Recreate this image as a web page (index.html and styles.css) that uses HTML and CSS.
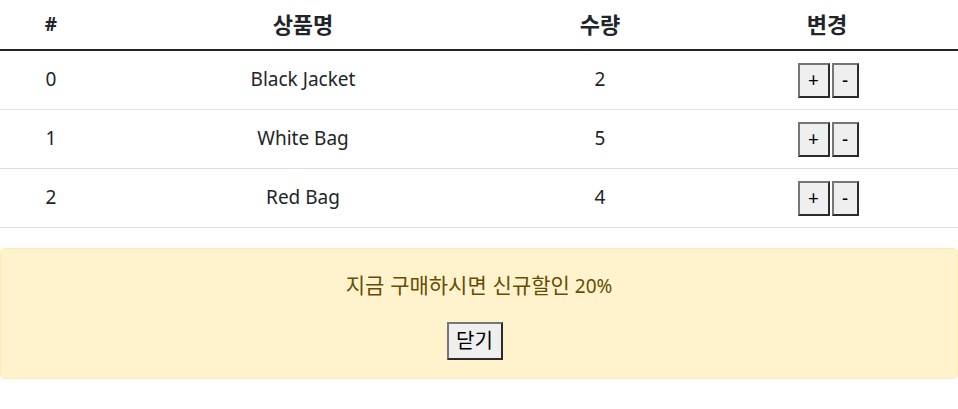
FILE: index.html
```html
<!DOCTYPE html>
<html lang="ko">
<head>
<meta charset="utf-8">
<title>Cart</title>
<link rel="stylesheet" href="styles.css">
</head>
<body>
<table class="cart">
  <colgroup>
    <col class="c-num">
    <col class="c-name">
    <col class="c-qty">
    <col class="c-act">
  </colgroup>
  <thead>
    <tr><th>#</th><th><span class="ko">상품명</span></th><th><span class="ko">수량</span></th><th><span class="ko">변경</span></th></tr>
  </thead>
  <tbody>
    <tr><td>0</td><td>Black Jacket</td><td>2</td><td><div class="btns"><button class="btn plus">+</button><button class="btn minus">-</button></div></td></tr>
    <tr><td>1</td><td>White Bag</td><td>5</td><td><div class="btns"><button class="btn plus">+</button><button class="btn minus">-</button></div></td></tr>
    <tr><td>2</td><td>Red Bag</td><td>4</td><td><div class="btns"><button class="btn plus">+</button><button class="btn minus">-</button></div></td></tr>
  </tbody>
</table>
<div class="alert">
  <p class="alert-text"><span class="ko">지금 구매하시면 신규할인</span> 20%</p>
  <div class="alert-actions"><button class="close-btn"><span class="ko">닫기</span></button></div>
</div>
</body>
</html>
```
FILE: styles.css
```css
html, body {
  margin: 0;
  padding: 0;
  background: #fff;
}
body {
  font-family: "Noto Sans", "Noto Sans CJK KR", sans-serif;
  font-size: 19px;
  color: #212529;
}
.ko {
  font-family: "Noto Sans CJK KR", sans-serif;
  font-size: 21px;
}
.cart {
  width: 100%;
  border-collapse: collapse;
  margin-bottom: 20px;
}
.c-num { width: 102px; }
.c-name { width: 402px; }
.c-qty { width: 192px; }
.c-act { width: 262px; }
.cart th {
  font-weight: 700;
  text-align: center;
  height: 50px;
  padding: 0 8px;
  line-height: 25px;
  box-sizing: border-box;
  vertical-align: middle;
}
.cart th .ko {
  font-size: 22px;
}
.cart tbody {
  border-top: 2px solid #212529;
}
.cart td {
  text-align: center;
  height: 59px;
  padding: 0 8px;
  line-height: 25px;
  vertical-align: middle;
  border-bottom: 1px solid #dee2e6;
  box-sizing: border-box;
}
.btns {
  display: inline-flex;
  gap: 2px;
  vertical-align: middle;
  padding-top: 2px;
  margin-left: 2px;
}
.btn, .close-btn {
  font-family: "Noto Sans", "Noto Sans CJK KR", sans-serif;
  background: #efefef;
  color: #000;
  border-style: solid;
  border-width: 2px;
  border-color: #767676 #2b2b2b #2b2b2b #767676;
  padding: 0;
  margin: 0;
  box-sizing: border-box;
  line-height: 1;
}
.btn {
  height: 35px;
  font-size: 19px;
}
.plus { width: 32px; }
.minus { width: 27px; }
.alert {
  background: #fff3cd;
  border: 1px solid #ffecb5;
  border-radius: 5px;
  color: #664d03;
  padding: 21px 19px 18px;
  text-align: center;
}
.alert-text {
  margin: 0 0 21px;
  line-height: 29px;
}
.alert-actions {
  display: flex;
  justify-content: center;
}
.close-btn {
  width: 56px;
  height: 38px;
  margin-right: 9px;
}
.close-btn .ko {
  font-size: 20px;
}
```
